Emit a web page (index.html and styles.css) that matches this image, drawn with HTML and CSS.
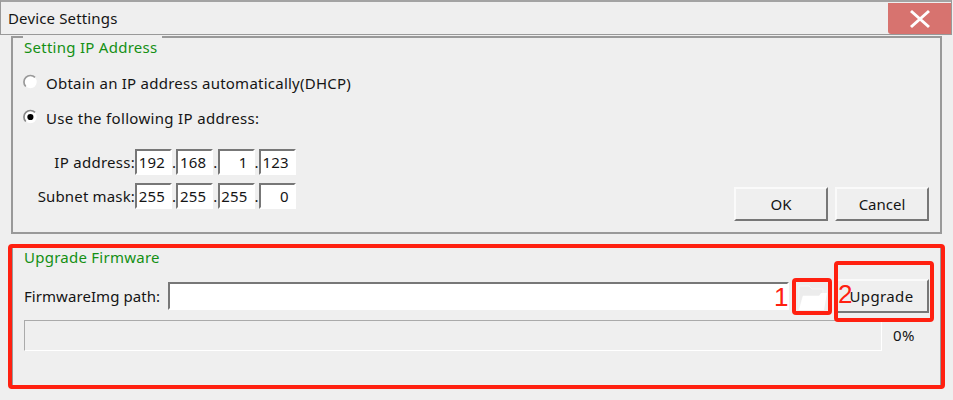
FILE: index.html
```html
<!DOCTYPE html>
<html lang="en">
<head>
<meta charset="utf-8">
<title>Device Settings</title>
<link rel="stylesheet" href="styles.css">
</head>
<body>
<div class="window">
  <header class="titlebar">
    <span class="title">Device Settings</span>
    <button class="close" aria-label="Close"><svg width="22" height="20" viewBox="0 0 22 20"><path d="M2 2 20 18M20 2 2 18" fill="none" stroke="#fff" stroke-width="3"/></svg></button>
  </header>
  <section class="group network">
    <h2 class="legend">Setting IP Address</h2>
    <label class="option"><svg class="radio" width="15" height="16" viewBox="0 0 15 16"><circle cx="7.5" cy="8" r="6.2" fill="#fff"/><path d="M2.8 12.5A6.2 6.2 0 0 1 12 3.4" fill="none" stroke="#999" stroke-width="1.7"/></svg><span class="dhcp">Obtain an IP address automatically(DHCP)</span></label>
    <label class="option"><svg class="radio" width="15" height="16" viewBox="0 0 15 16"><circle cx="7.5" cy="8" r="6.2" fill="#fff"/><path d="M2.8 12.5A6.2 6.2 0 0 1 12 3.4" fill="none" stroke="#888" stroke-width="1.7"/><circle cx="7.4" cy="8" r="3.1" fill="#000"/></svg><span class="static">Use the following IP address:</span></label>
    <div class="lower">
      <div class="addresses">
        <div class="address"><span class="name ip">IP address:</span><span class="octet">192</span><i>.</i><span class="octet">168</span><i>.</i><span class="octet">1</span><i>.</i><span class="octet">123</span></div>
        <div class="address"><span class="name mask">Subnet mask:</span><span class="octet">255</span><i>.</i><span class="octet">255</span><i>.</i><span class="octet">255</span><i>.</i><span class="octet">0</span></div>
      </div>
      <div class="actions"><button class="button">OK</button><button class="button">Cancel</button></div>
    </div>
  </section>
  <section class="group firmware">
    <h2 class="legend">Upgrade Firmware</h2>
    <div class="path-row">
      <span class="path-label">FirmwareImg path:</span>
      <div class="path-input"></div>
      <svg class="folder" width="30" height="30" viewBox="0 0 30 30"><path d="M1 29V5h10l3 3h11v7H5z" fill="#ececec" stroke="#f6f6f6"/><path d="M1 29 5 15h16l2-3h6l-3 17z" fill="#fff"/></svg>
      <button class="button">Upgrade</button>
    </div>
    <div class="progress-row"><div class="progress"></div><span class="percent">0%</span></div>
  </section>
  <div class="mark mark-panel"></div>
  <div class="mark mark-browse"></div>
  <div class="mark mark-upgrade"></div>
  <span class="step step-one">1</span>
  <span class="step step-two">2</span>
</div>
</body>
</html>
```
FILE: styles.css
```css
* { box-sizing: border-box; }
body { margin: 0; background: #efefef; color: #151515; font: 15px/20px "Noto Sans", "Open Sans", sans-serif; overflow: hidden; }
button { font: inherit; color: inherit; padding: 0; }
.window { position: relative; width: 953px; height: 400px; }
.titlebar { display: flex; justify-content: space-between; width: 952px; height: 35px; padding-left: 7px; border: 1px solid #999; border-top: 2px solid #a3a3a3; }
.title { padding-top: 6px; letter-spacing: .15px; }
.close { display: flex; align-items: center; justify-content: center; width: 63px; height: 31px; margin-top: 1px; border: 0; border-radius: 0 0 0 3px; background: #d7736f; }
.group { width: 931px; margin-left: 11px; border: 2px solid #999; padding: 0 11px; }
.network { height: 198px; margin-top: 1px; }
.legend { width: 139px; height: 24px; margin: -3px 0 0 -1px; padding: 2px 0 0 1px; background: #efefef; color: #149014; font-size: 15px; line-height: 20px; font-weight: 400; letter-spacing: .27px; white-space: nowrap; }
.option { display: flex; align-items: center; height: 35px; gap: 8px; white-space: nowrap; }
.network .legend + .option { margin-top: 6px; }
.radio { margin-left: -1px; margin-top: -1px; }
.dhcp { letter-spacing: .24px; }
.static { letter-spacing: .32px; }
.lower { display: flex; justify-content: space-between; margin-top: 14px; }
.address { display: flex; align-items: center; height: 26px; margin-bottom: 8px; }
.name { width: 111px; text-align: right; white-space: nowrap; }
.ip { letter-spacing: .27px; }
.mask { letter-spacing: .16px; }
.octet { width: 37px; height: 26px; border: 2px solid; border-color: #777 #fff #fff #777; background: #fff; padding: 1px 5px 0 0; line-height: 20px; letter-spacing: .2px; text-align: right; }
.address i { width: 4.3px; font-style: normal; }
.actions { display: flex; gap: 7px; margin: 38px 0 0; }
.button { width: 94px; height: 34px; flex: none; border: 2px solid; border-color: #fafafa #777 #777 #fafafa; background: #efefef; white-space: nowrap; }
.firmware { height: 143px; margin-top: 12px; }
.firmware .legend { width: 140px; margin-top: -3px; letter-spacing: .25px; }
.path-row { display: flex; align-items: center; height: 34px; margin-top: 10px; }
.path-label { width: 144px; margin-top: -1px; letter-spacing: .06px; white-space: nowrap; }
.path-input { width: 621px; height: 28px; border: 2px solid; border-color: #777 #fff #fff #777; background: #fff; }
.folder { margin: 0 6px 0 9px; }
.path-row .button { width: 95px; padding-bottom: 1px; letter-spacing: .4px; }
.progress-row { display: flex; align-items: center; gap: 11px; margin-top: 7px; }
.progress { width: 858px; height: 31px; border: 1px solid; border-color: #aaa #fff #fff #aaa; }
.percent { margin-top: -2px; letter-spacing: .5px; }
.mark { position: absolute; border: 4px solid #ff2010; border-radius: 4px; }
.mark-panel { left: 8px; top: 244px; width: 937px; height: 145px; }
.mark-browse { left: 792px; top: 278px; width: 40px; height: 37px; }
.mark-upgrade { left: 834px; top: 261px; width: 100px; height: 61px; }
.step { position: absolute; color: #ff2010; font: 26px/26px "Liberation Sans", sans-serif; }
.step-one { left: 774px; top: 284px; }
.step-two { left: 838px; top: 281px; }
```
